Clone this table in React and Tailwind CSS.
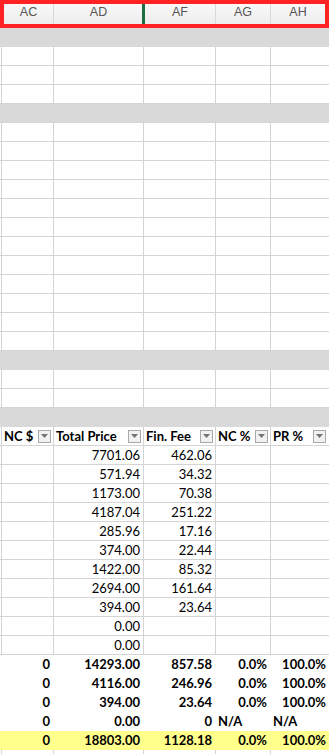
const GRID = "grid grid-cols-[53px_90px_72px_55px_1fr]";
const LINE = "border-[#d4d4d4]";

const letters = ["AC", "AD", "AF", "AG", "AH"];

const plainRows = [
  ["7701.06", "462.06"],
  ["571.94", "34.32"],
  ["1173.00", "70.38"],
  ["4187.04", "251.22"],
  ["285.96", "17.16"],
  ["374.00", "22.44"],
  ["1422.00", "85.32"],
  ["2694.00", "161.64"],
  ["394.00", "23.64"],
  ["0.00", ""],
  ["0.00", ""],
];

const boldRows = [
  ["0", "14293.00", "857.58", "0.0%", "100.0%"],
  ["0", "4116.00", "246.96", "0.0%", "100.0%"],
  ["0", "394.00", "23.64", "0.0%", "100.0%"],
  ["0", "0.00", "0", "N/A", "N/A"],
];

const ColumnHeader = () => (
  <div className="h-[28px] border-4 border-[#ff2222] bg-gradient-to-b from-[#f8f8f8] to-[#ededed]">
    <div className="grid h-full grid-cols-[49px_90px_72px_55px_1fr] font-['Liberation_Sans',Arial,sans-serif] text-[12.5px] leading-[14px] text-[#555555]">
      {letters.map((l, i) => (
        <div
          key={l}
          className={`text-center pt-[1px] ${i === 0 ? "" : i === 2 ? "border-l-[3px] border-[#1f6e43] -ml-[1px]" : "border-l border-[#d8d8d8]"}`}
        >
          {l}
        </div>
      ))}
    </div>
  </div>
);

const Band = () => <div className="h-[19px] bg-[#d9d9d9]" />;

const BlankRow = () => (
  <div className={`${GRID} h-[19px] border-b ${LINE}`}>
    <div className={`ml-px border-l ${LINE}`} />
    <div className={`border-l ${LINE}`} />
    <div className={`border-l ${LINE}`} />
    <div className={`border-l ${LINE}`} />
    <div className={`border-l ${LINE}`} />
  </div>
);

const FilterButton = () => (
  <span className="flex h-[13px] w-[13px] shrink-0 items-center justify-center border border-[#a9a9a9] bg-[#f1f1f1]">
    <svg width="7" height="4" viewBox="0 0 7 4">
      <path d="M0 0h7L3.5 4z" fill="#737373" />
    </svg>
  </span>
);

const TableHeader = () => {
  const labels = ["NC $", "Total Price", "Fin. Fee", "NC %", "PR %"];
  return (
    <div className={`${GRID} h-[19px] border-b ${LINE}`}>
      {labels.map((label, i) => (
        <div
          key={label}
          className={`flex items-center justify-between overflow-hidden border-l ${LINE} pl-[2px] pr-[2px] ${i === 0 ? "ml-px" : ""} ${i === 4 ? "pr-[3px]" : ""}`}
        >
          <span className="whitespace-nowrap font-bold">{label}</span>
          <FilterButton />
        </div>
      ))}
    </div>
  );
};

const PlainRow = ({ price, fee }) => (
  <div className={`${GRID} h-[19px] border-b ${LINE}`}>
    <div className={`ml-px border-l ${LINE}`} />
    <div className={`border-l ${LINE} px-[3px] text-right`}>{price}</div>
    <div className={`border-l ${LINE} px-[3px] text-right`}>{fee}</div>
    <div className={`border-l ${LINE}`} />
    <div className={`border-l ${LINE}`} />
  </div>
);

const BoldRow = ({ cells, highlight }) => (
  <div className={`${GRID} h-[19px] font-bold ${highlight ? "bg-[#ffff8c]" : "bg-white"}`}>
    {cells.map((c, i) => (
      <div
        key={i}
        className={`whitespace-nowrap px-[3px] ${c === "N/A" ? "text-left" : "text-right"} ${i === 0 ? "ml-px" : ""}`}
      >
        {c}
      </div>
    ))}
  </div>
);

export default function App() {
  return (
    <div className="h-[754px] w-[329px] overflow-hidden bg-white font-['Lato','Open_Sans',sans-serif] text-[13px] leading-[18px] text-black">
      <ColumnHeader />
      <Band />
      {[0, 1, 2].map((i) => (
        <BlankRow key={`a${i}`} />
      ))}
      <Band />
      {Array.from({ length: 12 }).map((_, i) => (
        <BlankRow key={`b${i}`} />
      ))}
      <Band />
      <BlankRow />
      <BlankRow />
      <Band />
      <TableHeader />
      {plainRows.map(([price, fee], i) => (
        <PlainRow key={`p${i}`} price={price} fee={fee} />
      ))}
      {boldRows.map((cells, i) => (
        <BoldRow key={`r${i}`} cells={cells} />
      ))}
      <BoldRow cells={["0", "18803.00", "1128.18", "0.0%", "100.0%"]} highlight />
      <BlankRow />
    </div>
  );
}
